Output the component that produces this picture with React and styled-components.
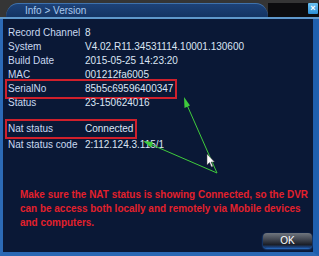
import React from "react";
import styled, { createGlobalStyle } from "styled-components";

const Global = createGlobalStyle`
  html, body { margin: 0; padding: 0; background: #2e2e2e; }
  body { font-family: "Liberation Sans", Arial, sans-serif; }
`;

const Window = styled.div`
  position: relative;
  width: 319px;
  height: 256px;
  display: flex;
  flex-direction: column;
  background: #2f2f2f;
  overflow: hidden;
`;

const TitleBar = styled.div`
  display: flex;
  align-items: flex-end;
  height: 17px;
  background: #353535;
`;

const Tab = styled.div`
  flex: none;
  width: 262px;
  height: 14px;
  margin-left: 6px;
  padding-left: 19px;
  box-sizing: border-box;
  border-radius: 12px 12px 0 0 / 14px 14px 0 0;
  border-top: 1px solid #3f72ad;
  background: linear-gradient(#1d4278, #143463);
  color: #a9c9ee;
  font-size: 10px;
  line-height: 13px;
`;

const TitleRest = styled.div`
  flex: 1;
  height: 14px;
  display: flex;
  justify-content: flex-end;
  align-items: flex-start;
  background: #0c0c0e;
`;

const CloseButton = styled.div`
  width: 10px;
  height: 11px;
  margin-right: 1px;
  border-radius: 1px;
  background: linear-gradient(#6cc2f2, #2c8fd6);
  color: #fff;
  font-size: 9px;
  font-weight: bold;
  line-height: 11px;
  text-align: center;
`;

const Divider = styled.div`
  height: 2px;
  background: #5f98cb;
`;

const Body = styled.div`
  flex: 1;
  display: flex;
  flex-direction: column;
  background: #0a1836;
  border-left: 3px solid #2c6ab6;
  border-right: 6px solid #1f5fae;
  border-bottom: 4px solid #2a68b4;
  padding: 7px 1px 4px 5px;
`;

const Row = styled.div`
  display: flex;
  width: ${(p) => (p.$boxed ? "fit-content" : "auto")};
  height: 14px;
  line-height: 14px;
  font-size: 10px;
  color: #dbe5f4;
  margin-top: ${(p) => p.$gap || 0}px;
  outline: ${(p) => (p.$boxed ? "2px solid #d0202c" : "none")};
  outline-offset: 1px;
  padding-right: ${(p) => p.$pr || 0}px;
`;

const Label = styled.span`
  width: 77px;
  flex: none;
  color: #c9d9f1;
`;

const Value = styled.span`
  white-space: nowrap;
`;

const Notice = styled.p`
  margin: 35px 0 0 12px;
  white-space: nowrap;
  font-family: "Liberation Sans", Arial, sans-serif;
  font-weight: bold;
  font-size: 11px;
  line-height: 14px;
  color: #e3202c;
  transform: scaleX(0.905);
  transform-origin: left top;
`;

const Footer = styled.div`
  margin-top: auto;
  display: flex;
  justify-content: flex-end;
`;

const OkButton = styled.div`
  width: 49px;
  height: 15px;
  border-radius: 4px;
  background: linear-gradient(#70767f 0%, #454a55 40%, #1a1e27 78%, #1d4f9a 100%);
  box-shadow: 0 1px 2px #2f7fe0;
  color: #fff;
  font-size: 10px;
  line-height: 15px;
  text-align: center;
`;

const Overlay = styled.svg`
  position: absolute;
  left: 0;
  top: 0;
  pointer-events: none;
`;

const rows = [
  ["Record Channel", "8"],
  ["System", "V4.02.R11.34531114.10001.130600"],
  ["Build Date", "2015-05-25 14:23:20"],
  ["MAC", "001212fa6005"],
];

export default function App() {
  return (
    <>
      <Global />
      <Window>
        <TitleBar>
          <Tab>Info &gt; Version</Tab>
          <TitleRest>
            <CloseButton>×</CloseButton>
          </TitleRest>
        </TitleBar>
        <Divider />
        <Body>
          {rows.map(([l, v]) => (
            <Row key={l}>
              <Label>{l}</Label>
              <Value>{v}</Value>
            </Row>
          ))}
          <Row $boxed $pr={1}>
            <Label>SerialNo</Label>
            <Value>85b5c69596400347</Value>
          </Row>
          <Row>
            <Label>Status</Label>
            <Value>23-150624016</Value>
          </Row>
          <Row $boxed $gap={12} $pr={1}>
            <Label>Nat status</Label>
            <Value>Connected</Value>
          </Row>
          <Row $gap={2}>
            <Label>Nat status code</Label>
            <Value>2:112.124.3.115/1</Value>
          </Row>
          <Notice>
            Make sure the NAT status is showing Connected, so the DVR
            <br />
            can be access both locally and remotely via Mobile devices
            <br />
            and computers.
          </Notice>
          <Footer>
            <OkButton>OK</OkButton>
          </Footer>
        </Body>
        <Overlay width="319" height="256" viewBox="0 0 319 256">
          <g stroke="#3fcb3c" strokeWidth="1" fill="none">
            <line x1="217" y1="173" x2="187" y2="105" />
            <line x1="217" y1="173" x2="150" y2="144" />
          </g>
          <g fill="#3fcb3c">
            <polygon points="184,97 184.5,108 190,105.5" />
            <polygon points="143,141 151,147.5 153,142" />
          </g>
          <polygon
            points="207,154 207,165 209.5,162.5 211.5,167 213,166.3 211,162 214.5,162"
            fill="#ffffff"
            stroke="#444"
            strokeWidth="0.5"
          />
        </Overlay>
      </Window>
    </>
  );
}
